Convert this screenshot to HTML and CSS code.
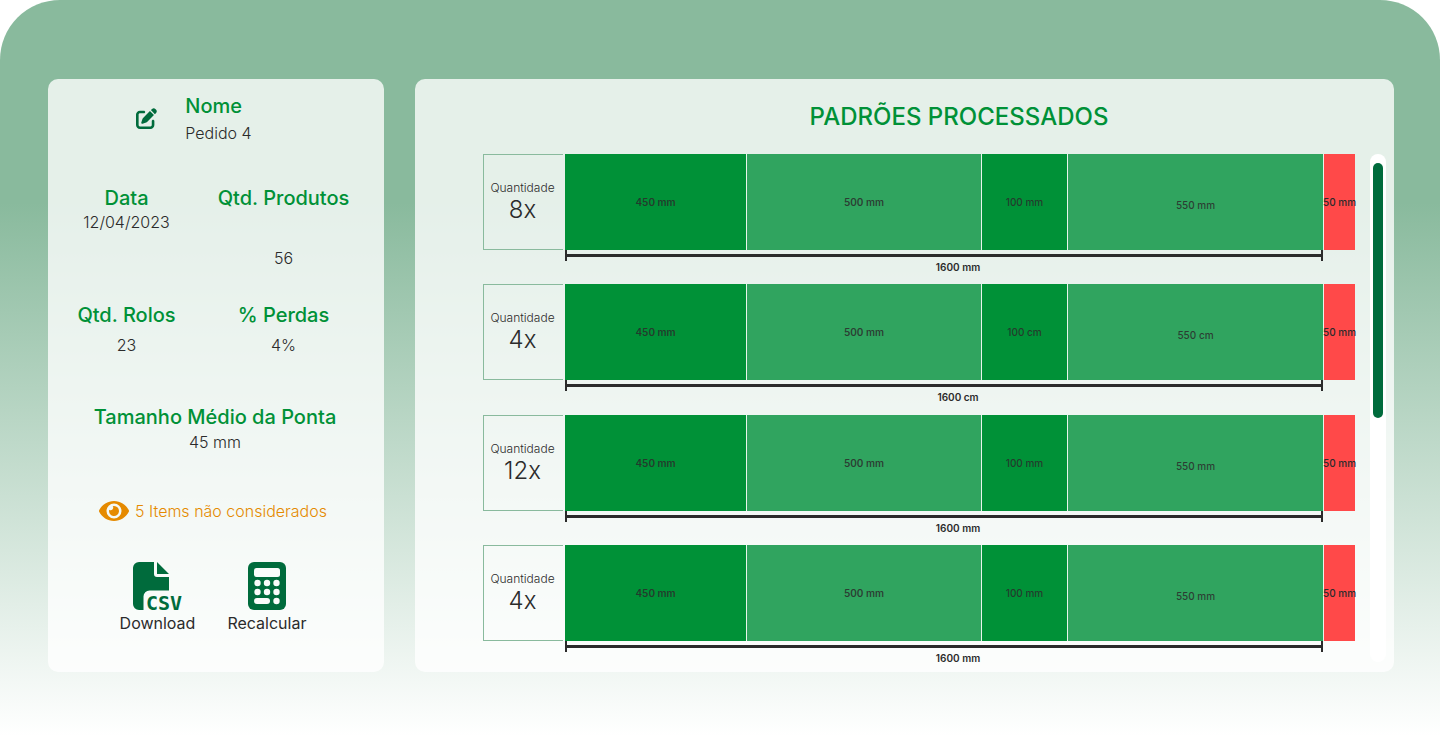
FILE: index.html
```html
<!DOCTYPE html>
<html lang="pt-BR">
<head>
<meta charset="utf-8">
<meta name="viewport" content="width=device-width, initial-scale=1">
<title>Padrões Processados</title>
<link rel="stylesheet" href="styles.css">
</head>
<body>
<div class="page">
  <aside class="panel summary">
    <div class="order">
      <button class="icon-button" type="button" aria-label="Editar nome">
        <svg class="edit-icon" viewBox="0 0 512 512" fill="currentColor" aria-hidden="true"><path d="M471.6 21.7c-21.9-21.9-57.3-21.9-79.2 0L362.3 51.7l97.9 97.9 30.1-30.1c21.9-21.9 21.9-57.3 0-79.2L471.6 21.7zm-299.2 220c-6.1 6.1-10.8 13.6-13.5 21.9l-29.6 88.8c-2.9 8.6-.6 18.1 5.8 24.6s15.9 8.7 24.6 5.8l88.8-29.6c8.2-2.7 15.7-7.4 21.9-13.5L437.7 172.3 339.7 74.3 172.4 241.7zM96 64C43 64 0 107 0 160V416c0 53 43 96 96 96H352c53 0 96-43 96-96V320c0-17.7-14.3-32-32-32s-32 14.3-32 32v96c0 17.7-14.3 32-32 32H96c-17.7 0-32-14.3-32-32V160c0-17.7 14.3-32 32-32h96c17.7 0 32-14.3 32-32s-14.3-32-32-32H96z"/></svg>
      </button>
      <dl class="stat stat-name"><dt>Nome</dt><dd>Pedido 4</dd></dl>
    </div>
    <div class="stats">
      <dl class="stat stat-tight"><dt>Data</dt><dd>12/04/2023</dd></dl>
      <dl class="stat stat-loose"><dt>Qtd. Produtos</dt><dd>56</dd></dl>
      <dl class="stat stat-wide"><dt>Qtd. Rolos</dt><dd>23</dd></dl>
      <dl class="stat stat-wide"><dt>% Perdas</dt><dd>4%</dd></dl>
    </div>
    <dl class="stat average"><dt>Tamanho Médio da Ponta</dt><dd>45 mm</dd></dl>
    <a class="ignored" href="#itens">
      <svg class="eye-icon" viewBox="0 64 576 384" fill="currentColor" aria-hidden="true"><path d="M572.52 241.4C518.29 135.59 410.93 64 288 64S57.68 135.64 3.48 241.41a32.35 32.35 0 0 0 0 29.19C57.71 376.41 165.07 448 288 448s230.32-71.64 284.52-177.41a32.35 32.35 0 0 0 0-29.19zM288 400a144 144 0 1 1 144-144 143.93 143.93 0 0 1-144 144zm0-240a95.31 95.31 0 0 0-25.31 3.79 47.85 47.85 0 0 1-66.9 66.9A95.78 95.78 0 1 0 288 160z"/></svg>
      <span>5 Items não considerados</span>
    </a>
    <div class="actions">
      <button class="action" type="button">
        <svg class="file-icon" viewBox="0 0 48 48" fill="currentColor" aria-hidden="true"><path d="M0 6a6 6 0 0 1 6-6H21V12a3 3 0 0 0 3 3H36V28.500H16.500a6 6 0 0 0-6 6V48H6a6 6 0 0 1-6-6zM36 12H24V0z"/><text class="file-type" x="13" y="48">CSV</text></svg>
        <span>Download</span>
      </button>
      <button class="action" type="button">
        <svg class="calc-icon" viewBox="0 0 38 48" aria-hidden="true">
          <rect width="38" height="48" rx="6" fill="currentColor"/>
          <g fill="#fafcfb"><rect x="6" y="6" width="26" height="9" rx="2.500"/><circle cx="9.500" cy="21" r="3.200"/><circle cx="19" cy="21" r="3.200"/><circle cx="28.500" cy="21" r="3.200"/><circle cx="9.500" cy="30" r="3.200"/><circle cx="19" cy="30" r="3.200"/><circle cx="28.500" cy="30" r="3.200"/><rect x="6" y="36" width="16" height="6" rx="3"/><circle cx="28.500" cy="39" r="3.200"/></g>
        </svg>
        <span>Recalcular</span>
      </button>
    </div>
  </aside>

  <main class="panel patterns">
    <h1 class="title">PADRÕES PROCESSADOS</h1>
    <div class="scroll-area">
      <div class="list">
        <section class="pattern">
          <div class="quantity"><span>Quantidade</span><strong>8x</strong></div>
          <div class="bar">
            <div class="piece dark bold">450 mm</div><div class="piece bold">500 mm</div><div class="piece dark">100 mm</div><div class="piece low">550 mm</div><div class="piece waste">50 mm</div>
            <div class="ruler"></div><div class="total">1600 mm</div>
          </div>
        </section>
        <section class="pattern">
          <div class="quantity"><span>Quantidade</span><strong>4x</strong></div>
          <div class="bar">
            <div class="piece dark bold">450 mm</div><div class="piece bold">500 mm</div><div class="piece dark">100 cm</div><div class="piece low">550 cm</div><div class="piece waste">50 mm</div>
            <div class="ruler"></div><div class="total">1600 cm</div>
          </div>
        </section>
        <section class="pattern">
          <div class="quantity"><span>Quantidade</span><strong>12x</strong></div>
          <div class="bar">
            <div class="piece dark bold">450 mm</div><div class="piece bold">500 mm</div><div class="piece dark">100 mm</div><div class="piece low">550 mm</div><div class="piece waste">50 mm</div>
            <div class="ruler"></div><div class="total">1600 mm</div>
          </div>
        </section>
        <section class="pattern">
          <div class="quantity"><span>Quantidade</span><strong>4x</strong></div>
          <div class="bar">
            <div class="piece dark bold">450 mm</div><div class="piece bold">500 mm</div><div class="piece dark">100 mm</div><div class="piece low">550 mm</div><div class="piece waste">50 mm</div>
            <div class="ruler"></div><div class="total">1600 mm</div>
          </div>
        </section>
      </div>
      <div class="track"><div class="thumb"></div></div>
    </div>
  </main>
</div>
</body>
</html>
```
FILE: styles.css
```css
* { box-sizing: border-box; }

body {
  margin: 0;
  background: #fff;
  color: #2b2b2b;
  font: 300 16px/20px Inter, "Liberation Sans", sans-serif;
}

dl, dd, h1 { margin: 0; }

button {
  padding: 0;
  border: 0;
  background: none;
  font: inherit;
  cursor: pointer;
}

svg { display: block; }

.page {
  display: grid;
  grid-template-columns: 336fr 979fr;
  gap: 31px;
  min-height: 100vh;
  padding: 79px 46px 79px 48px;
  border-radius: 60px 60px 0 0;
  background: linear-gradient(#89ba9d 27%, #fff 98%);
}

.panel {
  display: flex;
  flex-direction: column;
  border-radius: 10px;
  background: rgba(255, 255, 255, 0.78);
}

/* Order summary */

.summary {
  align-items: center;
  padding-top: 15px;
}

.order {
  display: flex;
  align-items: center;
  gap: 28px;
  margin-right: 44px;
}

.icon-button { color: #006b3c; }

.edit-icon { width: 21px; height: 21px; }

.stat {
  display: flex;
  flex-direction: column;
  gap: 3px;
  text-align: center;
}

.stat dt {
  color: #009137;
  font-size: 20px;
  font-weight: 500;
  line-height: 24px;
}

.stat-name {
  gap: 5px;
  text-align: left;
}

.stat-tight { gap: 2px; }
.stat-wide { gap: 8px; }
.stat-loose { gap: 38px; }

.stats {
  display: grid;
  grid-template-columns: 1fr 1fr;
  align-self: stretch;
  row-gap: 35px;
  margin-top: 43px;
  padding-right: 22px;
}

.average {
  margin-top: 50px;
  padding-right: 2px;
}

.ignored {
  display: flex;
  align-items: center;
  gap: 6px;
  margin: 49px 6px 0 0;
  color: #e58a00;
  text-decoration: none;
}

.eye-icon { width: 30px; height: 20px; }

.actions {
  display: flex;
  gap: 32px;
  margin: 41px 6px 0 0;
}

.action {
  display: flex;
  flex-direction: column;
  align-items: center;
  gap: 3px;
  color: #2b2b2b;
  font-weight: 400;
}

.action svg { height: 48px; color: #006b3c; }
.file-icon { width: 48px; overflow: visible; }
.calc-icon { width: 38px; }
.file-type { font: bold 20px "DejaVu Sans Mono", monospace; }

/* Processed patterns */

.patterns { padding: 23px 8px 8px 68px; }

.title {
  padding: 0 33px 0 82px;
  color: #009137;
  font-size: 24px;
  font-weight: 500;
  line-height: 30px;
  text-align: center;
}

.scroll-area {
  display: flex;
  flex: 1;
  gap: 15px;
  margin-top: 22px;
}

.list {
  display: flex;
  flex: 1;
  flex-direction: column;
  justify-content: space-between;
}

.pattern {
  display: flex;
  align-items: flex-start;
  gap: 2px;
}

.quantity {
  display: flex;
  flex: 0 0 80px;
  flex-direction: column;
  align-items: center;
  justify-content: center;
  height: 96px;
  padding-right: 2px;
  border: 1px solid #89ba9d;
  border-right: 0;
  font-size: 12px;
  line-height: 16px;
}

.quantity strong {
  font-size: 24px;
  font-weight: 300;
  line-height: 28px;
}

.bar {
  display: grid;
  flex: 1;
  grid-template-columns: 181fr 234fr 85fr 255fr 31fr;
  grid-template-rows: 96px 11px 12px;
  column-gap: 1px;
  font-size: 10px;
  font-weight: 500;
  line-height: 12px;
}

.piece {
  display: flex;
  align-items: center;
  justify-content: center;
  min-width: 0;
  background: #30a45f;
  box-shadow: 1px 0 #e8f5ec;
  color: rgba(43, 43, 43, 0.85);
  white-space: nowrap;
}

.dark { background: #009137; }
.bold { font-weight: 600; }
.low { padding-top: 6px; }

.waste {
  background: #ff4949;
  box-shadow: none;
  color: #2b2b2b;
}

.ruler {
  display: flex;
  grid-column: 1 / 5;
  align-items: center;
  border: solid #2b2b2b;
  border-width: 0 2px;
}

.ruler::before {
  flex: 1;
  height: 3px;
  background: #2b2b2b;
  content: "";
}

.total {
  grid-column: 1 / 5;
  padding-left: 28px;
  font-weight: 600;
  text-align: center;
}

.track {
  width: 16px;
  margin-bottom: 2px;
  padding: 9px 3px;
  border-radius: 8px;
  background: #fff;
}

.thumb {
  height: 52%;
  border-radius: 5px;
  background: #006b3c;
}
```
